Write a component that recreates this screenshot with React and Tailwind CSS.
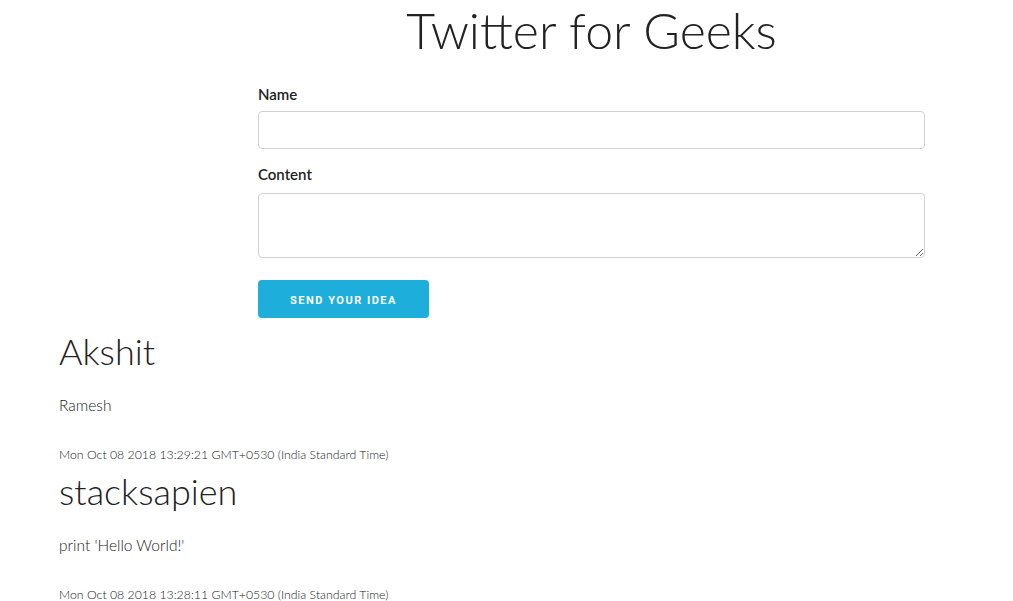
export default function App() {
  const posts = [
    { name: "Akshit", content: "Ramesh", date: "Mon Oct 08 2018 13:29:21 GMT+0530 (India Standard Time)" },
    { name: "stacksapien", content: "print 'Hello World!'", date: "Mon Oct 08 2018 13:28:11 GMT+0530 (India Standard Time)" },
  ];
  return (
    <div className="min-h-[601px] bg-white text-[#222]" style={{ fontFamily: "Lato, 'Open Sans', sans-serif" }}>
      <div className="ml-[258px] w-[667px]">
        <h1 className="h-[60px] text-center text-[50px] font-light leading-[60px] mb-[22px]">Twitter for Geeks</h1>
        <label className="block h-[24px] text-[15px] font-semibold leading-[24px] mb-[5px]">Name</label>
        <input className="block h-[38px] w-full rounded-[4px] border border-[#d1d1d1] bg-white px-[10px] mb-[13px]" />
        <label className="block h-[24px] text-[15px] font-semibold leading-[24px] mb-[7px]">Content</label>
        <textarea className="block h-[65px] w-full rounded-[4px] border border-[#d1d1d1] bg-white px-[10px] py-[6px]" />
        <button
          className="mt-[22px] block h-[38px] w-[171px] rounded-[4px] bg-[#1eaedb] pt-[3px] text-center text-[11px] font-bold uppercase leading-[35px] tracking-[1.5px] text-white"
          style={{ fontFamily: "Roboto, 'Liberation Sans', sans-serif" }}
        >
          Send your idea
        </button>
      </div>
      <div className="pl-[59px] pt-[10px]">
        {posts.map((p) => (
          <div key={p.name} className="h-[140px]">
            <h3 className="h-[47px] text-[36px] font-light leading-[47px] mb-[18px]">{p.name}</h3>
            <p className="h-[24px] text-[15.5px] font-light leading-[24px] mb-[28px]">{p.content}</p>
            <p className="h-[20px] text-[12.3px] font-light leading-[20px]">{p.date}</p>
          </div>
        ))}
      </div>
    </div>
  );
}
